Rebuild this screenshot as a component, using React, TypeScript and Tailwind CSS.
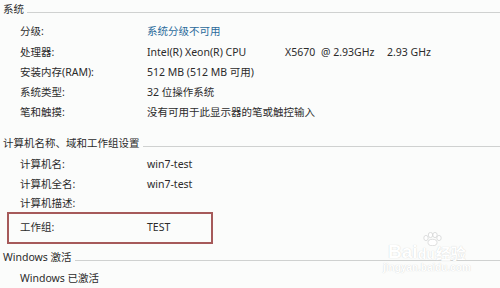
const font = '[font-family:"Segoe_UI","Noto_Sans","Noto_Sans_CJK_SC",sans-serif]';

function Header({ title }: { title: string }) {
  return (
    <div className="flex h-[20px] items-center pl-[3px]">
      <span className="text-[10.5px] text-[#2b2b2b]">{title}</span>
      <div className="ml-[3px] mt-[4px] h-px flex-1 bg-[#cfd1d0]" />
    </div>
  );
}

function Row({ label, children, h = 'h-[20.25px]' }: { label: string; children?: React.ReactNode; h?: string }) {
  return (
    <div className={`flex items-center pl-[20px] ${h}`}>
      <span className="w-[127px] shrink-0 text-[10.5px] text-[#2b2b2b]">{label}</span>
      <span className="text-[10.5px] text-[#2b2b2b]">{children}</span>
    </div>
  );
}

export default function App() {
  return (
    <div className={`relative h-[288px] w-[500px] overflow-hidden bg-[#fbfcfb] ${font}`}>
      <Header title="系统" />
      <div className="mt-[2px]">
        <Row label="分级:">
          <span className="text-[#2a6a9a]">系统分级不可用</span>
        </Row>
        <Row label="处理器:">
          <span className="flex">
            <span className="w-[138px]">Intel(R) Xeon(R) CPU</span>
            <span className="w-[36px]">X5670</span>
            <span className="w-[66px]">@ 2.93GHz</span>
            <span>2.93 GHz</span>
          </span>
        </Row>
        <Row label="安装内存(RAM):">512 MB (512 MB 可用)</Row>
        <Row label="系统类型:">32 位操作系统</Row>
        <Row label="笔和触摸:">没有可用于此显示器的笔或触控输入</Row>
      </div>

      <div className="mt-[11px]">
        <Header title="计算机名称、域和工作组设置" />
      </div>
      <Row label="计算机名:" h="h-[20.5px]">win7-test</Row>
      <Row label="计算机全名:" h="h-[20.5px]">win7-test</Row>
      <Row label="计算机描述:" h="h-[17px]" />
      <div className="ml-[7px] flex h-[32px] w-[206px] items-center border-2 border-[#a65a5a] pl-[11px]">
        <span className="w-[127px] shrink-0 text-[10.5px] text-[#2b2b2b]">工作组:</span>
        <span className="text-[10.5px] text-[#2b2b2b]">TEST</span>
      </div>

      <div className="mt-[4px]">
        <Header title="Windows 激活" />
      </div>
      <Row label="Windows 已激活" h="h-[21px]" />

      <div className="pointer-events-none absolute left-[383px] top-[232px] flex flex-col items-center text-white [text-shadow:0_0_1px_#c9cbca]">
        <svg width="22" height="14" viewBox="0 0 22 14" className="-mb-[4px] ml-[10px]">
          <g fill="#fff" stroke="#d4d6d5" strokeWidth="0.8">
            <ellipse cx="5" cy="6" rx="2.2" ry="2.6" />
            <ellipse cx="9.5" cy="3" rx="2.2" ry="2.6" />
            <ellipse cx="14" cy="3" rx="2.2" ry="2.6" />
            <ellipse cx="18" cy="6" rx="2.2" ry="2.6" />
            <ellipse cx="11.5" cy="10.5" rx="4.5" ry="3.2" />
          </g>
        </svg>
        <div className="flex items-end leading-none">
          <span className="text-[19px] font-bold [font-family:Arial,'Liberation_Sans',sans-serif]">Bai</span>
          <span className="text-[14px] font-bold [font-family:Arial,'Liberation_Sans',sans-serif]">du</span>
          <span className="ml-[1px] text-[15px] font-bold">经验</span>
        </div>
        <span className="mt-[2px] text-[10px] font-bold leading-none [font-family:Arial,'Liberation_Sans',sans-serif]">jingyan.baidu.com</span>
      </div>
    </div>
  );
}
